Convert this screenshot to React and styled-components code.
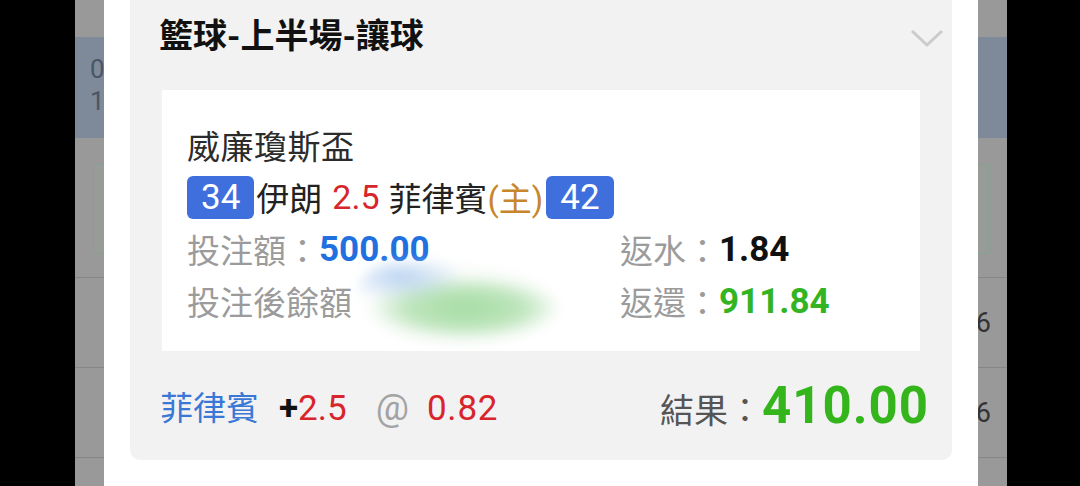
import React from "react";
import styled, { createGlobalStyle } from "styled-components";

const Global = createGlobalStyle`
  html, body { margin: 0; padding: 0; background: #000; overflow: hidden; }
  body { font-family: "Roboto", "Noto Sans CJK TC", sans-serif; }
`;

const Stage = styled.div`
  width: 1080px;
  height: 486px;
  background: #000;
  display: flex;
  justify-content: center;
  padding-left: 2px;
  box-sizing: border-box;
`;

const Screen = styled.div`
  position: relative;
  width: 932px;
  height: 486px;
  background: #999;
  overflow: hidden;
`;

const TopStrip = styled.div`
  height: 37px;
  background: #999;
`;

const InfoBand = styled.div`
  height: 101px;
  background: #7e8a99;
  padding: 18px 0 0 15px;
  box-sizing: border-box;
  display: flex;
  flex-direction: column;
  gap: 4px;
  color: #4c5563;
  font-size: 26px;
  line-height: 28px;
`;

const GreenBox = styled.div`
  margin: 26px 18px 0;
  height: 88px;
  background: #979c99;
  border: 1px solid #86a091;
`;

const ListRow = styled.div`
  height: 89px;
  border-top: 1px solid #878787;
  display: flex;
  align-items: center;
  justify-content: flex-end;
  padding-right: 16px;
  color: #333;
  font-size: 27px;
`;

const FirstRow = styled(ListRow)`
  margin-top: 23px;
`;

const Modal = styled.div`
  position: absolute;
  top: 0;
  bottom: 0;
  left: 29px;
  width: 874px;
  background: #fff;
  padding: 0 26px 26px;
  box-sizing: border-box;
  display: flex;
  flex-direction: column;
  justify-content: flex-end;
`;

const Card = styled.div`
  height: 460px;
  background: #f2f2f2;
  border-radius: 0 0 10px 10px;
  display: flex;
  flex-direction: column;
`;

const TitleRow = styled.div`
  height: 90px;
  display: flex;
  align-items: flex-start;
  justify-content: space-between;
  padding: 14px 8px 0 29px;
  box-sizing: border-box;
`;

const Title = styled.div`
  font-size: 34px;
  font-weight: 700;
  color: #111;
  line-height: 44px;
`;

const Chevron = styled.svg`
  margin-top: 14px;
`;

const Panel = styled.div`
  margin: 0 32px;
  height: 261px;
  background: #fff;
  padding: 29px 0 24px 25px;
  box-sizing: border-box;
  display: grid;
  grid-template-columns: 433px 1fr;
  grid-auto-rows: 52px;
`;

const FullLine = styled.div`
  grid-column: 1 / -1;
  display: flex;
  align-items: center;
  font-size: 33px;
  color: #2b2b2b;
  white-space: nowrap;
`;

const Cell = styled.div`
  display: flex;
  align-items: center;
  font-size: 33px;
  white-space: nowrap;
  position: relative;
`;

const Badge = styled.span`
  display: inline-flex;
  align-items: center;
  justify-content: center;
  height: 43px;
  padding: 0 14px;
  border-radius: 6px;
  background: #3f6fdc;
  color: #fff;
  font-size: 35px;
  margin-right: ${(p) => p.$mr || 0}px;
  margin-left: ${(p) => p.$ml || 0}px;
`;

const Txt = styled.span`
  color: ${(p) => p.$c || "#222"};
  font-weight: ${(p) => (p.$bold ? 700 : 400)};
  font-size: ${(p) => p.$size || 33}px;
  margin-left: ${(p) => p.$ml || 0}px;
  letter-spacing: ${(p) => p.$ls || 0}px;
`;

const Blur = styled.span`
  position: absolute;
  left: 166px;
  top: -14px;
  width: 212px;
  height: 90px;
  border-radius: 45px;
  background:
    radial-gradient(ellipse 62px 24px at 48px 16px, rgba(178, 206, 240, 0.9), rgba(180, 208, 240, 0)),
    radial-gradient(ellipse 95px 32px at 112px 47px, rgba(150, 214, 148, 0.85) 0%, rgba(170, 222, 168, 0.75) 60%, rgba(210, 238, 208, 0) 100%),
    radial-gradient(ellipse 106px 46px at 106px 45px, rgba(248, 251, 248, 1) 70%, rgba(255, 255, 255, 0) 100%);
  filter: blur(6px);
`;

const BottomRow = styled.div`
  flex: 1;
  display: flex;
  align-items: center;
  justify-content: space-between;
  padding: 0 23px 0 30px;
  white-space: nowrap;
`;

const Group = styled.div`
  display: flex;
  align-items: baseline;
`;

export default function App() {
  return (
    <>
      <Global />
      <Stage>
        <Screen>
          <TopStrip />
          <InfoBand>
            <span>0</span>
            <span>1</span>
          </InfoBand>
          <GreenBox />
          <FirstRow>6</FirstRow>
          <ListRow>6</ListRow>
          <ListRow />
          <Modal>
            <Card>
              <TitleRow>
                <Title>籃球-上半場-讓球</Title>
                <Chevron width="34" height="20" viewBox="0 0 34 20">
                  <polyline points="2,3 17,17 32,3" fill="none" stroke="#cbcbcb" strokeWidth="3" />
                </Chevron>
              </TitleRow>
              <Panel>
                <FullLine>
                  <Txt $c="#2b2b2b" $ls={0.5}>威廉瓊斯盃</Txt>
                </FullLine>
                <FullLine>
                  <Badge $mr={2}>34</Badge>
                  <Txt>伊朗</Txt>
                  <Txt $c="#d8242b" $size={34} $ml={10}>2.5</Txt>
                  <Txt $ml={9}>菲律賓</Txt>
                  <Txt $c="#c8862c">(主)</Txt>
                  <Badge $ml={3}>42</Badge>
                </FullLine>
                <Cell>
                  <Txt $c="#9b9b9b">投注額：</Txt>
                  <Txt $c="#2170e0" $bold $size={35}>500.00</Txt>
                </Cell>
                <Cell>
                  <Txt $c="#9b9b9b">返水：</Txt>
                  <Txt $c="#111" $bold $size={35}>1.84</Txt>
                </Cell>
                <Cell>
                  <Txt $c="#9b9b9b">投注後餘額</Txt>
                  <Blur />
                </Cell>
                <Cell>
                  <Txt $c="#9b9b9b">返還：</Txt>
                  <Txt $c="#33b422" $bold $size={35}>911.84</Txt>
                </Cell>
              </Panel>
              <BottomRow>
                <Group>
                  <Txt $c="#3a78d6" $size={33}>菲律賓</Txt>
                  <Txt $c="#111" $bold $size={35} $ml={20}>+</Txt>
                  <Txt $c="#d8242b" $size={35}>2.5</Txt>
                  <Txt $c="#a3a3a3" $size={37} $ml={29}>@</Txt>
                  <Txt $c="#d8242b" $size={35} $ml={18} $ls={0.8}>0.82</Txt>
                </Group>
                <Group>
                  <Txt $c="#555" $size={34}>結果：</Txt>
                  <Txt $c="#35b51c" $bold $size={51} $ls={1}>410.00</Txt>
                </Group>
              </BottomRow>
            </Card>
          </Modal>
        </Screen>
      </Stage>
    </>
  );
}
